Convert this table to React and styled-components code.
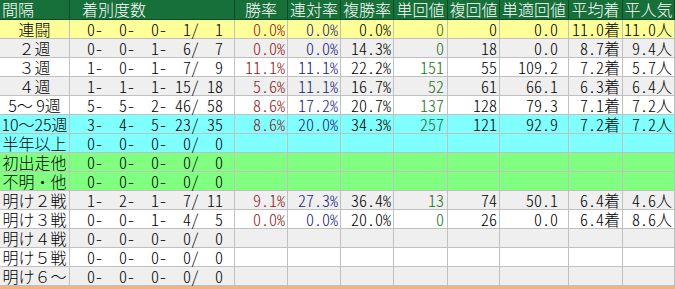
import React from "react"
import styled, { createGlobalStyle } from "styled-components"

const GlobalStyle = createGlobalStyle`
  html, body {
    margin: 0;
    padding: 0;
    background: #fff;
    overflow: hidden;
  }
`

const COLS = "70px 165px 53px 53px 53px 54px 52px 69px 54px 52px"

const rowColors = {
  yellow: "#ffff99",
  gray: "#efefef",
  white: "#ffffff",
  cyan: "#80ffff",
  green: "#80ff80",
}

const Table = styled.div`
  width: 675px;
  font-family: "Noto Sans CJK JP", "Noto Sans CJK SC", sans-serif;
  font-weight: 300;
  font-size: 16px;
  color: #000;
`

const HeadRow = styled.div`
  display: grid;
  grid-template-columns: ${COLS};
  height: 20px;
  background: #17703a;
  color: #fff;
`

const HeadCell = styled.div`
  box-sizing: border-box;
  border-right: 1px solid #0d4a25;
  border-bottom: 1px solid #0d4a25;
  line-height: 19px;
  white-space: pre;
  text-align: ${(p) => (p.$indent !== undefined ? "left" : "center")};
  padding-left: ${(p) => p.$indent || 0}px;
`

const Row = styled.div`
  display: grid;
  grid-template-columns: ${COLS};
  height: 19px;
  background: ${(p) => rowColors[p.$bg]};
`

const Cell = styled.div`
  box-sizing: border-box;
  border-right: 1px solid #c0c0c0;
  border-bottom: 1px solid #c0c0c0;
  line-height: 18px;
  white-space: pre;
  font-feature-settings: "hwid";
  text-align: right;
  padding-right: ${(p) => (p.$pr !== undefined ? p.$pr : 2)}px;
  color: ${(p) => p.$color || "#000"};
`

const LabelCell = styled(Cell)`
  font-feature-settings: normal;
  text-align: center;
  padding-right: 0;
`

const Footer = styled.div`
  height: 3px;
  background: #f4b183;
`

const headers = [
  { t: "間隔", indent: 2 },
  { t: "着別度数", indent: 12 },
  { t: "勝率" },
  { t: "連対率" },
  { t: "複勝率" },
  { t: "単回値" },
  { t: "複回値" },
  { t: "単適回値" },
  { t: "平均着" },
  { t: "平人気" },
]

const Z = [0, 0, 0, 0, 0]

const rows = [
  ["連闘", "yellow", [0, 0, 0, 1, 1], ["0.0%", "0.0%", "0.0%", "0", "0", "0.0", "11.0着", "11.0人"]],
  ["２週", "gray", [0, 0, 1, 6, 7], ["0.0%", "0.0%", "14.3%", "0", "18", "0.0", "8.7着", "9.4人"]],
  ["３週", "white", [1, 0, 1, 7, 9], ["11.1%", "11.1%", "22.2%", "151", "55", "109.2", "7.2着", "5.7人"]],
  ["４週", "gray", [1, 1, 1, 15, 18], ["5.6%", "11.1%", "16.7%", "52", "61", "66.1", "6.3着", "6.4人"]],
  ["5～ 9週", "white", [5, 5, 2, 46, 58], ["8.6%", "17.2%", "20.7%", "137", "128", "79.3", "7.1着", "7.2人"]],
  ["10～25週", "cyan", [3, 4, 5, 23, 35], ["8.6%", "20.0%", "34.3%", "257", "121", "92.9", "7.2着", "7.2人"]],
  ["半年以上", "cyan", Z, null],
  ["初出走他", "green", Z, null],
  ["不明・他", "green", Z, null],
  ["明け２戦", "gray", [1, 2, 1, 7, 11], ["9.1%", "27.3%", "36.4%", "13", "74", "50.1", "6.4着", "4.6人"]],
  ["明け３戦", "white", [0, 0, 1, 4, 5], ["0.0%", "0.0%", "20.0%", "0", "26", "0.0", "6.4着", "8.6人"]],
  ["明け４戦", "gray", Z, null],
  ["明け５戦", "white", Z, null],
  ["明け６～", "gray", Z, null],
]

// colours and right paddings for the value columns
const valueCols = [
  { color: "#8b1a1a" },
  { color: "#1c1c80" },
  {},
  { color: "#1e6e1e", pr: 3 },
  {},
  { pr: 10 },
  {},
  {},
]

const pad = (n) => String(n).padStart(3, " ")

const record = ([a, b, c, d, e]) =>
  `${pad(a)}-${pad(b)}-${pad(c)}-${pad(d)}/${pad(e)}`

export default function App() {
  return (
    <>
      <GlobalStyle />
      <Table>
        <HeadRow>
          {headers.map((h) => (
            <HeadCell key={h.t} $indent={h.indent}>
              {h.t}
            </HeadCell>
          ))}
        </HeadRow>
        {rows.map(([label, bg, rec, vals]) => (
          <Row key={label} $bg={bg}>
            <LabelCell>{label}</LabelCell>
            <Cell $pr={11}>{record(rec)}</Cell>
            {valueCols.map((c, i) => (
              <Cell key={i} $color={c.color} $pr={c.pr}>
                {vals ? vals[i] : ""}
              </Cell>
            ))}
          </Row>
        ))}
        <Footer />
      </Table>
    </>
  )
}
